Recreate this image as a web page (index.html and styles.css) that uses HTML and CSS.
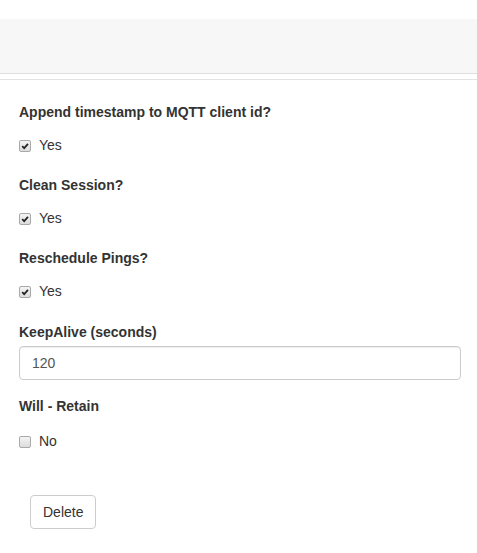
FILE: index.html
```html
<!DOCTYPE html>
<html>
<head>
<meta charset="utf-8">
<link rel="stylesheet" href="styles.css">
</head>
<body>
<div class="topbar"></div>
<div class="rule"></div>
<form class="form">
  <div class="group">
    <div class="label">Append timestamp to MQTT client id?</div>
    <div class="check"><span class="box checked"><svg viewBox="0 0 12 12" width="12" height="12"><path d="M2.6 6.2 L5 8.6 L9.6 3.4" fill="none" stroke="#222" stroke-width="2"/></svg></span><span>Yes</span></div>
  </div>
  <div class="group">
    <div class="label">Clean Session?</div>
    <div class="check"><span class="box checked"><svg viewBox="0 0 12 12" width="12" height="12"><path d="M2.6 6.2 L5 8.6 L9.6 3.4" fill="none" stroke="#222" stroke-width="2"/></svg></span><span>Yes</span></div>
  </div>
  <div class="group group-pre">
    <div class="label">Reschedule Pings?</div>
    <div class="check"><span class="box checked"><svg viewBox="0 0 12 12" width="12" height="12"><path d="M2.6 6.2 L5 8.6 L9.6 3.4" fill="none" stroke="#222" stroke-width="2"/></svg></span><span>Yes</span></div>
  </div>
  <div class="group group-input">
    <div class="label label-input">KeepAlive (seconds)</div>
    <div class="input">120</div>
  </div>
  <div class="group group-last">
    <div class="label label-last">Will - Retain</div>
    <div class="check"><span class="box"></span><span>No</span></div>
  </div>
  <div class="actions">
    <button type="button" class="btn">Delete</button>
  </div>
</form>
</body>
</html>
```

FILE: styles.css
```css
* { box-sizing: border-box; }
html, body { margin: 0; padding: 0; background: #fff; }
body {
  font-family: "Liberation Sans", Arial, Helvetica, sans-serif;
  font-size: 14px;
  line-height: 20px;
  color: #333;
}
.topbar {
  margin-top: 19px;
  height: 55px;
  background: #f7f7f7;
  border-bottom: 1px solid #dedede;
}
.rule {
  margin-top: 5px;
  height: 1px;
  background: #e3e3e3;
}
.form {
  padding: 22px 16px 0 19px;
  display: flex;
  flex-direction: column;
}
.group { margin-bottom: 20px; }
.group-pre { margin-bottom: 21px; }
.label {
  font-weight: bold;
  height: 20px;
  margin-bottom: 13px;
}
.check {
  display: flex;
  align-items: center;
  height: 20px;
  gap: 8px;
  color: #333;
}
.box {
  width: 12px;
  height: 12px;
  border: 1px solid #a9a9a9;
  border-radius: 2px;
  background: linear-gradient(#f4f4f4, #dcdcdc);
  display: flex;
  align-items: center;
  justify-content: center;
  margin-top: 1px;
}
.box svg { display: block; }
.group-input { margin-bottom: 16px; }
.label-input { margin-bottom: 4px; }
.input {
  height: 34px;
  border: 1px solid #ccc;
  border-radius: 4px;
  padding: 6px 12px;
  color: #555;
  box-shadow: inset 0 1px 1px rgba(0,0,0,0.075);
}
.label-last { margin-bottom: 15px; }
.group-last { margin-bottom: 44px; }
.actions { padding-left: 11px; }
.btn {
  font-family: inherit;
  font-size: 14px;
  line-height: 20px;
  color: #333;
  background: #fff;
  border: 1px solid #ccc;
  border-radius: 4px;
  padding: 6px 12px;
  height: 34px;
}
```
